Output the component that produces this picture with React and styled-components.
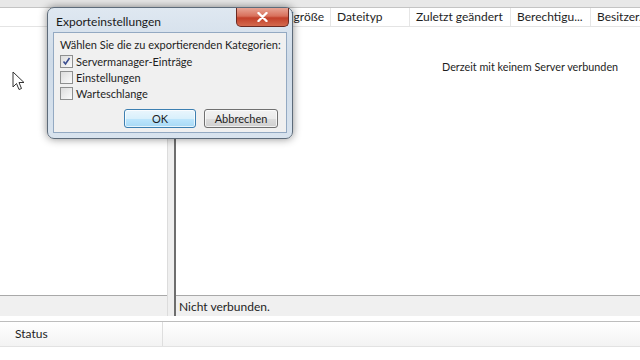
import React from 'react';
import styled, { createGlobalStyle } from 'styled-components';

const GlobalStyle = createGlobalStyle`
  body {
    margin: 0;
    font-family: Lato, "Noto Sans", sans-serif;
    color: #1e1e1e;
  }
`;

const Screen = styled.div`
  position: relative;
  width: 640px;
  height: 360px;
  overflow: hidden;
  background: #ffffff;
  font-size: 11px;
`;

const TopStrip = styled.div`
  height: 7px;
  background: #e8e8e8;
  border-bottom: 1px solid #c4c4c4;
`;

const Panes = styled.div`
  display: flex;
  height: 308px;
`;

const Pane = styled.div`
  display: flex;
  flex-direction: column;
  width: ${p => p.width || 'auto'};
  flex: ${p => (p.width ? 'none' : '1')};
  min-width: 0;
`;

const HeaderRow = styled.div`
  display: flex;
  height: 18px;
  border-bottom: 1px solid #e4e4e4;
  background: #fff;
  white-space: nowrap;
  font-size: 12px;
`;

const HeaderCell = styled.div`
  flex: none;
  width: ${p => p.width}px;
  padding: 0 6px;
  box-sizing: border-box;
  line-height: 18px;
  text-align: ${p => (p.right ? 'right' : 'left')};
  border-right: 1px solid #e6e6e6;
  overflow: hidden;
`;

const PaneBody = styled.div`
  flex: 1;
  background: #fff;
`;

const Message = styled.div`
  padding: 33px 0 0 266px;
  white-space: nowrap;
  font-size: 10.8px;
`;

const PaneStatus = styled.div`
  height: 20px;
  line-height: 22px;
  padding-left: 3px;
  background: #f0f0f0;
  border-top: 1px solid #a9a9a9;
  font-size: 12px;
`;

const Splitter = styled.div`
  width: 6px;
  background: #efefef;
  border-left: 1px solid #dcdcdc;
  border-right: 2px solid #6e6e6e;
`;

const StatusBar = styled.div`
  display: flex;
  height: 24px;
  margin-top: 5px;
  border-top: 1px solid #bdbdbd;
  border-bottom: 1px solid #e2e2e2;
  background: linear-gradient(#ffffff, #f3f3f3);
  font-size: 12px;
`;

const StatusCell = styled.div`
  width: 147px;
  padding-left: 15px;
  line-height: 24px;
  border-right: 1px solid #dedede;
`;

const Dialog = styled.div`
  position: absolute;
  left: 47px;
  top: 7px;
  width: 246px;
  height: 132px;
  box-sizing: border-box;
  padding: 0 5px 5px 5px;
  display: flex;
  flex-direction: column;
  border: 1px solid #5d6b7a;
  border-radius: 7px;
  background: linear-gradient(180deg, #dfe8f1 0%, #cfdbe8 40%, #d8e3ee 100%);
  box-shadow: 0 0 9px rgba(0, 0, 0, 0.45);
`;

const TitleBar = styled.div`
  display: flex;
  align-items: flex-start;
  justify-content: space-between;
  height: 24px;
`;

const Title = styled.div`
  padding: 6px 0 0 3px;
  font-size: 12px;
  color: #1a1a1a;
`;

const CloseButton = styled.div`
  width: 51px;
  height: 18px;
  margin-right: -2px;
  display: flex;
  align-items: center;
  justify-content: center;
  border: 1px solid #6b2a22;
  border-top: none;
  border-radius: 0 0 5px 5px;
  background: linear-gradient(#e8a595 0%, #d8705b 45%, #c2402a 55%, #d46a4e 100%);
`;

const Content = styled.div`
  flex: 1;
  display: flex;
  flex-direction: column;
  padding: 4px 6px 0 6px;
  background: #f0f0f0;
  border: 1px solid #93a9c2;
  white-space: nowrap;
`;

const Label = styled.div`
  height: 16px;
  line-height: 16px;
`;

const CheckRow = styled.label`
  display: flex;
  align-items: center;
  gap: 3px;
  height: 16px;
`;

const Box = styled.span`
  width: 11px;
  height: 11px;
  display: flex;
  align-items: center;
  justify-content: center;
  border: 1px solid #8e8f8f;
  background: linear-gradient(135deg, #dcdcdc, #fbfbfb);
`;

const Buttons = styled.div`
  display: flex;
  justify-content: flex-end;
  gap: 8px;
  margin-top: 8px;
  padding-right: 2px;
`;

const Button = styled.div`
  width: ${p => p.width}px;
  height: 19px;
  box-sizing: border-box;
  display: flex;
  align-items: center;
  justify-content: center;
  border-radius: 3px;
  border: 1px solid ${p => (p.focused ? '#3c7fb1' : '#707070')};
  background: ${p =>
    p.focused
      ? 'linear-gradient(#eaf6fd 0%, #d9f0fc 50%, #bee6fd 51%, #a7d9f5 100%)'
      : 'linear-gradient(#f2f2f2 0%, #ebebeb 50%, #dddddd 51%, #cfcfcf 100%)'};
  box-shadow: inset 0 0 0 1px rgba(255, 255, 255, 0.7);
`;

const Cursor = styled.svg`
  position: absolute;
  left: 12px;
  top: 71px;
`;

const CheckBox = ({ checked, children }) => (
  <CheckRow>
    <Box>
      {checked && (
        <svg width="9" height="9" viewBox="0 0 9 9">
          <path d="M1.5 4.5 L3.5 7 L7.5 1" fill="none" stroke="#3a4d8f" strokeWidth="1.6" />
        </svg>
      )}
    </Box>
    {children}
  </CheckRow>
);

const columns = [
  { label: 'Dateiname', width: 55 },
  { label: 'Dateigröße', width: 100, right: true },
  { label: 'Dateityp', width: 79 },
  { label: 'Zuletzt geändert', width: 101 },
  { label: 'Berechtigu...', width: 80 },
  { label: 'Besitzer/Gruppe', width: 100 },
];

const App = () => (
  <Screen>
    <GlobalStyle />
    <TopStrip />
    <Panes>
      <Pane width="167px">
        <HeaderRow />
        <PaneBody />
        <PaneStatus>&nbsp;</PaneStatus>
      </Pane>
      <Splitter />
      <Pane>
        <HeaderRow>
          {columns.map(c => (
            <HeaderCell key={c.label} width={c.width} right={c.right}>
              {c.label}
            </HeaderCell>
          ))}
        </HeaderRow>
        <PaneBody>
          <Message>Derzeit mit keinem Server verbunden</Message>
        </PaneBody>
        <PaneStatus>Nicht verbunden.</PaneStatus>
      </Pane>
    </Panes>
    <StatusBar>
      <StatusCell>Status</StatusCell>
    </StatusBar>

    <Cursor width="14" height="20" viewBox="0 0 14 20">
      <path d="M1 1 L1 16 L4.5 12.5 L7 18.5 L9.5 17.5 L7 11.5 L12 11.5 Z" fill="#fff" stroke="#333" strokeWidth="1" strokeLinejoin="round" />
    </Cursor>

    <Dialog>
      <TitleBar>
        <Title>Exporteinstellungen</Title>
        <CloseButton>
          <svg width="11" height="10" viewBox="0 0 11 10">
            <path d="M1.5 1 L9.5 9 M9.5 1 L1.5 9" stroke="#fff" strokeWidth="2.4" strokeLinecap="round" />
          </svg>
        </CloseButton>
      </TitleBar>
      <Content>
        <Label>Wählen Sie die zu exportierenden Kategorien:</Label>
        <CheckBox checked>Servermanager-Einträge</CheckBox>
        <CheckBox>Einstellungen</CheckBox>
        <CheckBox>Warteschlange</CheckBox>
        <Buttons>
          <Button width={72} focused>OK</Button>
          <Button width={74}>Abbrechen</Button>
        </Buttons>
      </Content>
    </Dialog>
  </Screen>
);

export default App;
